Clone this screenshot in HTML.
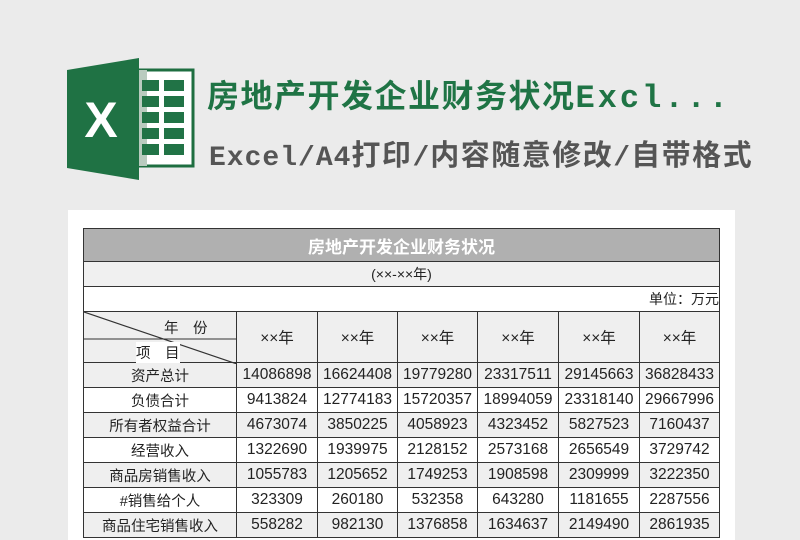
<!DOCTYPE html>
<html><head><meta charset="utf-8"><style>
body{margin:0;width:800px;height:526px;background:#ebebeb;position:relative;overflow:hidden;font-family:"Liberation Sans","Noto Sans CJK SC",sans-serif}
.t1{position:absolute;left:207px;top:71px;font-size:32px;font-weight:bold;color:#1f7445;white-space:nowrap;letter-spacing:1.5px}
.t1 span{font-family:"Liberation Mono",monospace;letter-spacing:3px}
.t2{position:absolute;left:209px;top:132px;font-size:29px;color:#555;white-space:nowrap;letter-spacing:1.5px;font-weight:bold}
.t2 span{font-family:"Liberation Mono",monospace;font-size:28px;letter-spacing:1px}
.card{position:absolute;left:68px;top:210px;width:667px;height:330px;background:#fff}
table{position:absolute;left:83px;top:228px;border-collapse:collapse;font-size:15.5px;color:#222;table-layout:fixed}
td{border:1.5px solid #333;text-align:center;padding:0;height:24px;white-space:nowrap;font-family:"Liberation Sans","Noto Sans CJK SC",sans-serif}
td:first-child{font-size:14.5px}
.g td{background:#efefef}
</style></head><body>
<svg style="position:absolute;left:64px;top:58px" width="132" height="124">
<rect x="73" y="12" width="56" height="96" fill="#fff" stroke="#1e6e40" stroke-width="3"/>
<rect x="73" y="12" width="10" height="96" fill="#b9cbbf"/>
<g fill="#217346">
<rect x="78" y="22" width="17" height="11"/><rect x="100" y="22" width="20" height="11"/>
<rect x="78" y="38" width="17" height="11"/><rect x="100" y="38" width="20" height="11"/>
<rect x="78" y="54" width="17" height="11"/><rect x="100" y="54" width="20" height="11"/>
<rect x="78" y="70" width="17" height="11"/><rect x="100" y="70" width="20" height="11"/>
<rect x="78" y="86" width="17" height="11"/><rect x="100" y="86" width="20" height="11"/>
</g>
<polygon points="3,12 75,0 75,122 3,110" fill="#1f7244"/>
<text x="37" y="79" font-family="Liberation Sans" font-weight="bold" font-size="50" fill="#fff" text-anchor="middle">X</text>
</svg>
<div class="t1">房地产开发企业财务状况<span>Excl...</span></div>
<div class="t2"><span>Excel/A4</span>打印<span>/</span>内容随意修改<span>/</span>自带格式</div>
<div class="card"></div>
<table>
<colgroup><col style="width:153px"><col style="width:81px"><col style="width:80px"><col style="width:80px"><col style="width:81px"><col style="width:81px"><col style="width:80px"></colgroup>
<tr><td colspan="7" style="background:#b0b0b0;color:#fff;font-weight:bold;font-size:17px;height:32px">房地产开发企业财务状况</td></tr>
<tr><td colspan="7" style="background:#f0f0f0;height:24px;font-size:14px">(××-××年)</td></tr>
<tr><td colspan="7" style="text-align:right;height:24px;font-size:14px">单位：万元</td></tr>
<tr class="g"><td style="height:50px;position:relative;padding:0">
<svg style="position:absolute;left:0;top:0" width="153" height="52"><line x1="0" y1="0" x2="153" y2="52" stroke="#333" stroke-width="1.2"/><line x1="0" y1="27" x2="153" y2="27" stroke="#333" stroke-width="1"/></svg>
<div style="position:absolute;left:80px;top:5px">年　份</div><div style="position:absolute;left:52px;top:30px;background:#fff">项　目</div></td>
<td>××年</td><td>××年</td><td>××年</td><td>××年</td><td>××年</td><td>××年</td></tr>
<tr class="g"><td>资产总计</td><td>14086898</td><td>16624408</td><td>19779280</td><td>23317511</td><td>29145663</td><td>36828433</td></tr>
<tr><td>负债合计</td><td>9413824</td><td>12774183</td><td>15720357</td><td>18994059</td><td>23318140</td><td>29667996</td></tr>
<tr class="g"><td>所有者权益合计</td><td>4673074</td><td>3850225</td><td>4058923</td><td>4323452</td><td>5827523</td><td>7160437</td></tr>
<tr><td>经营收入</td><td>1322690</td><td>1939975</td><td>2128152</td><td>2573168</td><td>2656549</td><td>3729742</td></tr>
<tr class="g"><td>商品房销售收入</td><td>1055783</td><td>1205652</td><td>1749253</td><td>1908598</td><td>2309999</td><td>3222350</td></tr>
<tr><td>#销售给个人</td><td>323309</td><td>260180</td><td>532358</td><td>643280</td><td>1181655</td><td>2287556</td></tr>
<tr class="g"><td>商品住宅销售收入</td><td>558282</td><td>982130</td><td>1376858</td><td>1634637</td><td>2149490</td><td>2861935</td></tr>
</table>
</body></html>
